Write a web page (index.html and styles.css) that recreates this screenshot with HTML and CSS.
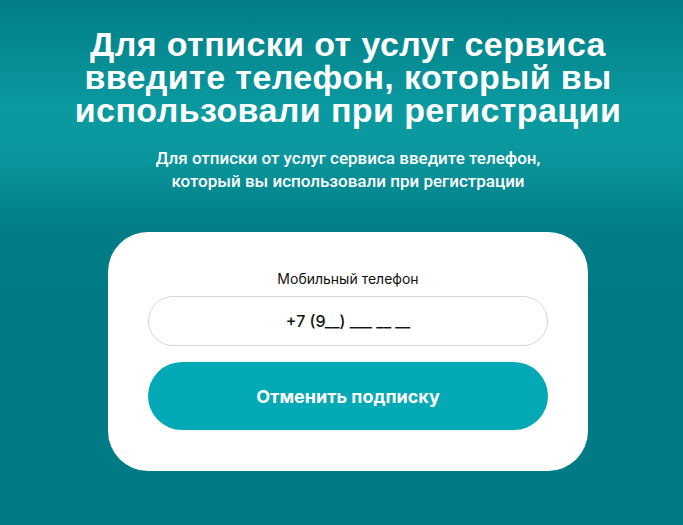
FILE: index.html
```html
<!DOCTYPE html>
<html lang="ru">
<head>
<meta charset="utf-8">
<title>Отмена подписки</title>
<link rel="stylesheet" href="styles.css">
</head>
<body>
<main class="page">
  <h1 class="title">Для отписки от услуг сервиса<br>введите телефон, который вы<br>использовали при регистрации</h1>
  <p class="subtitle">Для отписки от услуг сервиса введите телефон,<br>который вы использовали при регистрации</p>
  <form class="card">
    <label class="label" for="phone">Мобильный телефон</label>
    <input class="input" id="phone" type="text" value="+7 (9__) ___ __ __">
    <button class="button" type="button">Отменить подписку</button>
  </form>
</main>
</body>
</html>
```
FILE: styles.css
```css
html, body {
  margin: 0;
  padding: 0;
  height: 100%;
}
body {
  background: linear-gradient(180deg, #037d86 0px, #0a9aa0 110px, #0a989e 150px, #027c86 230px, #007a85 300px, #007a85 100%);
  font-family: "Liberation Sans", Arial, sans-serif;
  color: #fff;
}
.page {
  display: flex;
  flex-direction: column;
  align-items: center;
  padding: 28px 0 0 13px;
}
.title {
  margin: 0;
  font-size: 34px;
  line-height: 33px;
  font-weight: 700;
  letter-spacing: 0.4px;
  text-align: center;
}
.subtitle {
  margin: 20px 0 0;
  font-family: Roboto, "Liberation Sans", sans-serif;
  font-size: 17px;
  line-height: 23px;
  font-weight: 500;
  text-align: center;
}
.card {
  margin-top: 39px;
  width: 480px;
  box-sizing: border-box;
  padding: 37px 40px 41px;
  background: #fff;
  border-radius: 40px;
  display: flex;
  flex-direction: column;
  align-items: stretch;
}
.label {
  font-family: Inter, "Noto Sans", sans-serif;
  font-size: 14px;
  line-height: 19px;
  color: #111;
  text-align: center;
}
.input {
  margin-top: 8px;
  height: 50px;
  box-sizing: border-box;
  border: 1px solid #d6d6d6;
  border-radius: 25px;
  background: #fff;
  font-family: Inter, "Noto Sans", sans-serif;
  font-size: 16px;
  font-weight: 500;
  color: #111;
  text-align: center;
  outline: none;
  padding: 0 20px;
}
.button {
  margin-top: 16px;
  height: 68px;
  border: 0;
  border-radius: 34px;
  background: #03a9b4;
  color: #fff;
  font-family: Inter, "Noto Sans", sans-serif;
  font-size: 18px;
  font-weight: 700;
  cursor: pointer;
}
```
